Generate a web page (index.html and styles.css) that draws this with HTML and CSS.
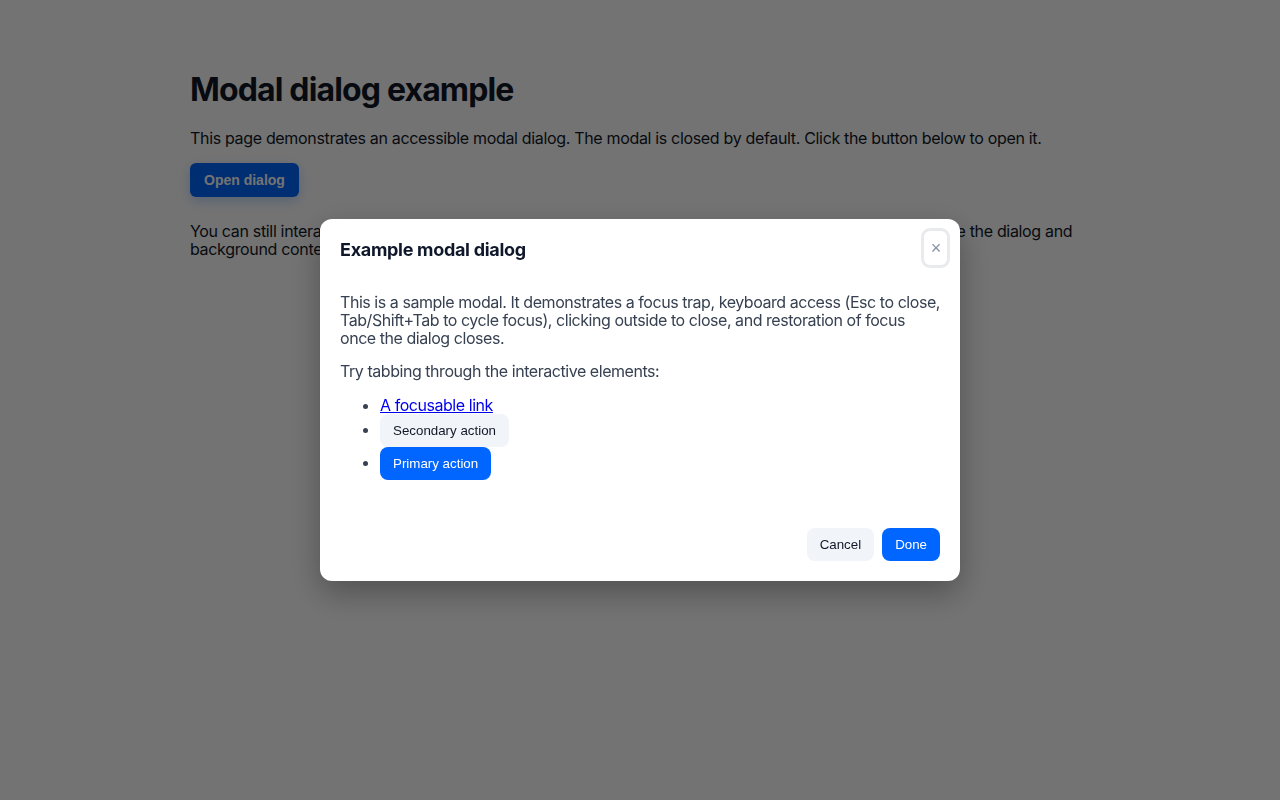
FILE: index.html
```html
<!DOCTYPE html>
<html lang="en">
<head>
<meta charset="utf-8">
<title>Modal dialog example</title>
<link rel="stylesheet" href="styles.css">
</head>
<body>
<main class="page">
  <h1 class="page-title">Modal dialog example</h1>
  <p class="page-text">This page demonstrates an accessible modal dialog. The modal is closed by default. Click the button below to open it.</p>
  <button class="btn-open" type="button">Open dialog</button>
  <p class="page-text page-note">You can still interact with the page's content when the modal is closed. When it is open, focus is kept inside the dialog and background content is made inert.</p>
</main>

<div class="backdrop">
  <div class="modal" role="dialog" aria-modal="true" aria-labelledby="modal-title">
    <div class="modal-header">
      <h2 class="modal-title" id="modal-title">Example modal dialog</h2>
      <button class="modal-close" type="button" aria-label="Close">&times;</button>
    </div>
    <div class="modal-body">
      <p class="modal-text">This is a sample modal. It demonstrates a focus trap, keyboard access (Esc to close, Tab/Shift+Tab to cycle focus), clicking outside to close, and restoration of focus once the dialog closes.</p>
      <p class="modal-text">Try tabbing through the interactive elements:</p>
      <ul class="modal-list">
        <li><a href="#" class="modal-link">A focusable link</a></li>
        <li><button class="btn btn-secondary" type="button">Secondary action</button></li>
        <li><button class="btn btn-primary" type="button">Primary action</button></li>
      </ul>
    </div>
    <div class="modal-footer">
      <button class="btn btn-secondary" type="button">Cancel</button>
      <button class="btn btn-primary" type="button">Done</button>
    </div>
  </div>
</div>
</body>
</html>
```

FILE: styles.css
```css
html, body {
  margin: 0;
  padding: 0;
}

body {
  background: #ffffff;
  color: #111827;
  font-family: Inter, "Liberation Sans", Arial, sans-serif;
  font-size: 16px;
  line-height: 1.15;
  letter-spacing: -0.33px;
}

.page {
  max-width: 900px;
  margin: 0 auto;
  padding: 48px 0;
}

.page-title {
  font-size: 32px;
  font-weight: 700;
  line-height: 1.2;
  letter-spacing: -0.85px;
  margin: 23px 0 20px;
}

.page-text {
  margin: 0 0 16px;
  line-height: 18px;
}

.page-note {
  margin-top: 25px;
}

.btn-open {
  font-family: "Liberation Sans", Arial, sans-serif;
  font-size: 14px;
  font-weight: 700;
  letter-spacing: 0;
  color: #ffffff;
  background: #0066ff;
  border: 0;
  border-radius: 6px;
  padding: 9px 14px;
  box-shadow: 0 4px 12px rgba(0, 102, 255, 0.25);
}

.backdrop {
  position: fixed;
  inset: 0;
  background: rgba(0, 0, 0, 0.55);
  display: flex;
  align-items: center;
  justify-content: center;
}

.modal {
  width: 640px;
  background: #ffffff;
  border-radius: 12px;
  box-shadow: 0 12px 32px rgba(0, 0, 0, 0.3);
  display: flex;
  flex-direction: column;
}

.modal-header {
  display: flex;
  align-items: center;
  justify-content: space-between;
  padding: 9px 10px 0 20px;
}

.modal-title {
  margin: 0;
  padding-top: 4px;
  font-size: 18px;
  font-weight: 700;
  line-height: 22px;
  letter-spacing: -0.3px;
  color: #0f172a;
}

.modal-close {
  width: 29px;
  height: 40px;
  box-sizing: border-box;
  border: 3px solid #e8eaee;
  border-radius: 9px;
  background: #ffffff;
  color: #8591a6;
  font-family: "Liberation Sans", Arial, sans-serif;
  font-size: 18px;
  line-height: 1;
  letter-spacing: 0;
  padding: 0 0 0 1px;
}

.modal-body {
  padding: 25px 20px 0;
  color: #374151;
  letter-spacing: -0.45px;
}

.modal-text {
  margin: 0 0 15px;
  line-height: 18px;
}

.modal-text-lead {
  letter-spacing: -0.5px;
}

.modal-list {
  margin: 16px 0 0;
  padding-left: 40px;
  line-height: 18px;
}

.modal-link {
  color: #0000ee;
}

.btn {
  font-family: "Liberation Sans", Arial, sans-serif;
  font-size: 13.333px;
  line-height: 15px;
  letter-spacing: 0;
  padding: 8px 12px;
  border: 1px solid transparent;
  border-radius: 8px;
  cursor: pointer;
}

.btn-secondary {
  background: #f1f5f9;
  color: #111827;
}

.btn-primary {
  background: #0066ff;
  color: #ffffff;
}

.modal-footer {
  display: flex;
  justify-content: flex-end;
  gap: 8px;
  padding: 48px 20px 20px;
}
```
